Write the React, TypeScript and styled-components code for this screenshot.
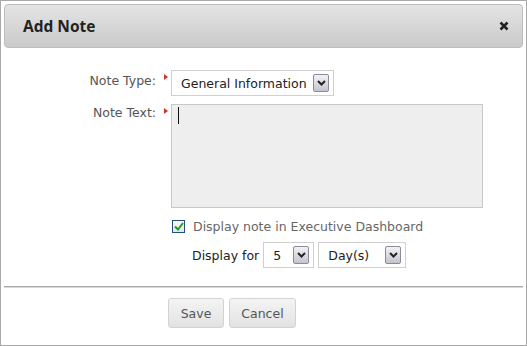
import React from "react";
import styled, { createGlobalStyle } from "styled-components";

const GlobalStyle = createGlobalStyle`
  html, body {
    margin: 0;
    padding: 0;
    background: #fff;
  }
  * {
    box-sizing: border-box;
  }
`;

const Dialog = styled.div`
  width: 527px;
  height: 346px;
  border: 1px solid #a9a9a9;
  padding: 3px;
  display: flex;
  flex-direction: column;
  font-family: "DejaVu Sans", Verdana, sans-serif;
  font-size: 12.5px;
  color: #555;
  background: #fff;
`;

const Header = styled.div`
  height: 44px;
  border: 1px solid #bcbcbc;
  border-radius: 4px;
  background: linear-gradient(#e4e4e4, #cacaca);
  display: flex;
  align-items: center;
  justify-content: space-between;
  padding: 0 12px 0 18px;
`;

const Title = styled.h1`
  margin: 0;
  font-family: "Open Sans", "Liberation Sans", sans-serif;
  font-weight: 700;
  font-size: 15.5px;
  color: #222;
`;

const Close = styled.button`
  border: 0;
  background: none;
  padding: 0;
  width: 12px;
  height: 12px;
  display: flex;
  align-items: center;
  justify-content: center;
  cursor: pointer;
`;

const Form = styled.div`
  flex: 1;
  display: flex;
  flex-direction: column;
  padding-top: 22px;
`;

const Row = styled.div<{ $gap?: number }>`
  display: grid;
  grid-template-columns: 155px 12px auto;
  align-items: start;
  margin-bottom: ${(p) => p.$gap ?? 8}px;
`;

const Label = styled.label<{ $top?: number }>`
  text-align: right;
  padding-right: 3px;
  padding-top: ${(p) => p.$top ?? 2}px;
  color: #555;
`;

const Marker = styled.span<{ $top: number }>`
  width: 0;
  height: 0;
  margin: ${(p) => p.$top}px 0 0 5px;
  border-top: 3px solid transparent;
  border-bottom: 3px solid transparent;
  border-left: 4px solid #d2322d;
`;

const SelectBox = styled.div<{ $w: number; $h: number }>`
  width: ${(p) => p.$w}px;
  height: ${(p) => p.$h}px;
  border: 1px solid #cfcfcf;
  background: #fff;
  display: flex;
  align-items: center;
  justify-content: space-between;
  padding: 0 4px 0 9px;
  color: #222;
`;

const ArrowBtn = styled.span`
  width: 16px;
  height: 18px;
  border: 1px solid #8a8a9a;
  border-radius: 2px;
  background: linear-gradient(#f2f2f6, #c4c4d0);
  display: flex;
  align-items: center;
  justify-content: center;
`;

const TextArea = styled.div`
  width: 312px;
  height: 104px;
  border: 1px solid #c8c8c8;
  background: #eeeeee;
  padding: 2px 6px;
`;

const Caret = styled.span`
  display: block;
  width: 1px;
  height: 17px;
  background: #111;
`;

const CheckRow = styled.div`
  display: flex;
  align-items: center;
  gap: 8px;
  padding-left: 168px;
  margin-top: 11px;
  margin-bottom: 8px;
  color: #666;
`;

const CheckBox = styled.span`
  width: 13px;
  height: 13px;
  border: 1px solid #24507e;
  background: linear-gradient(#fafafa, #e4e4e4);
  display: flex;
  align-items: center;
  justify-content: center;
`;

const DurationRow = styled.div`
  display: flex;
  align-items: center;
  gap: 4px;
  padding-left: 188px;
  color: #222;
`;

const Divider = styled.hr`
  margin: 18px 0 0;
  border: 0;
  border-top: 1px solid #a9a9a9;
  border-bottom: 1px solid #d8d8d8;
`;

const Buttons = styled.div`
  display: flex;
  gap: 5px;
  padding: 10px 0 0 164px;
`;

const Button = styled.button<{ $w: number }>`
  width: ${(p) => p.$w}px;
  height: 30px;
  border: 1px solid #d2d2d2;
  border-radius: 3px;
  background: linear-gradient(#f4f4f4, #e2e2e2);
  color: #555;
  font-family: "DejaVu Sans", Verdana, sans-serif;
  font-size: 12.5px;
  padding: 0;
`;

const Chevron = () => (
  <svg width="9" height="6" viewBox="0 0 9 6">
    <path d="M1 1 L4.5 4.5 L8 1" fill="none" stroke="#222" strokeWidth="2" />
  </svg>
);

const Select = ({ value, w, h }: { value: string; w: number; h: number }) => (
  <SelectBox $w={w} $h={h}>
    <span>{value}</span>
    <ArrowBtn>
      <Chevron />
    </ArrowBtn>
  </SelectBox>
);

const App = () => {
  return (
    <>
      <GlobalStyle />
      <Dialog>
        <Header>
          <Title>Add Note</Title>
          <Close aria-label="close">
            <svg width="10" height="10" viewBox="0 0 10 10">
              <path d="M1.5 1.5 L8.5 8.5 M8.5 1.5 L1.5 8.5" stroke="#222" strokeWidth="2.6" />
            </svg>
          </Close>
        </Header>
        <Form>
          <Row>
            <Label $top={3}>Note Type:</Label>
            <Marker $top={4} />
            <Select value="General Information" w={163} h={26} />
          </Row>
          <Row $gap={0}>
            <Label $top={1}>Note Text:</Label>
            <Marker $top={4} />
            <TextArea>
              <Caret />
            </TextArea>
          </Row>
          <CheckRow>
            <CheckBox>
              <svg width="10" height="9" viewBox="0 0 10 9">
                <path d="M1 4.5 L4 7.5 L9 1" fill="none" stroke="#1f9d2a" strokeWidth="2" />
              </svg>
            </CheckBox>
            <span>Display note in Executive Dashboard</span>
          </CheckRow>
          <DurationRow>
            <span>Display for</span>
            <Select value="5" w={51} h={26} />
            <Select value="Day(s)" w={88} h={26} />
          </DurationRow>
          <Divider />
          <Buttons>
            <Button $w={56}>Save</Button>
            <Button $w={67}>Cancel</Button>
          </Buttons>
        </Form>
      </Dialog>
    </>
  );
};

export default App;
